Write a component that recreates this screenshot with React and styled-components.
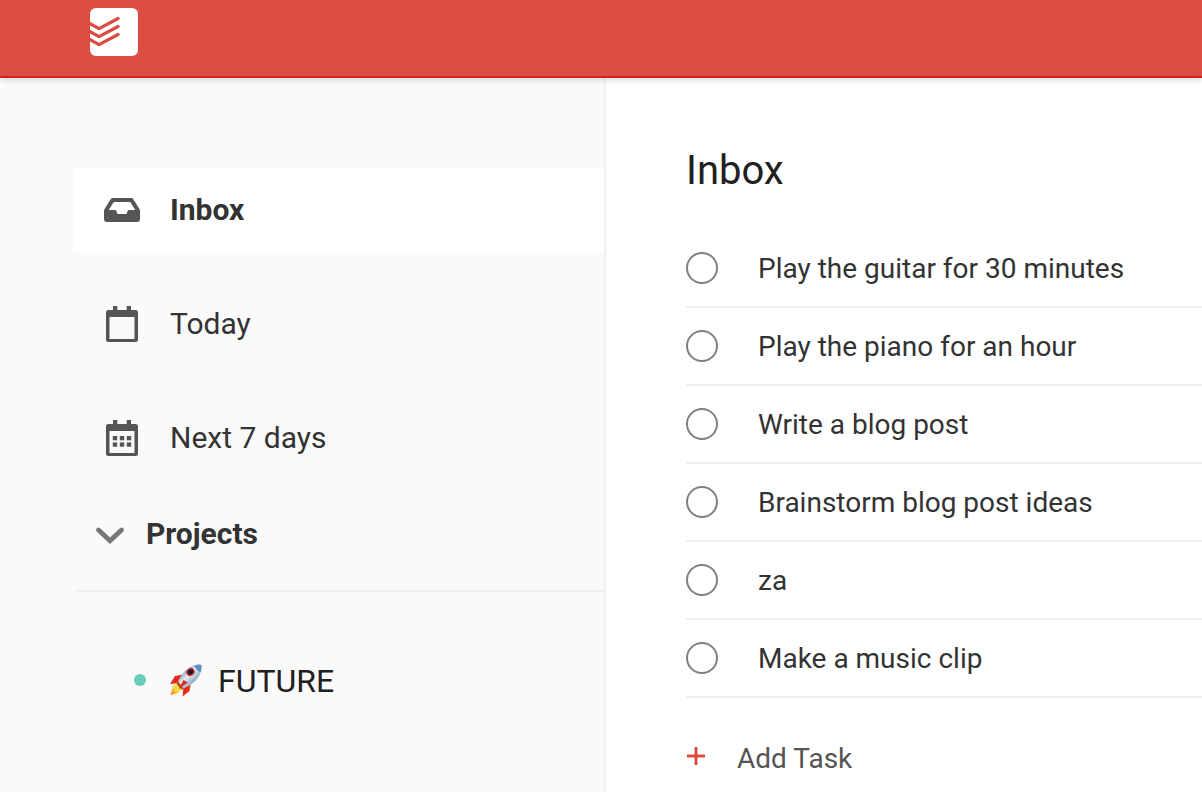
import React from "react";
import styled, { createGlobalStyle } from "styled-components";

const Global = createGlobalStyle`
  * { box-sizing: border-box; }
  body { margin: 0; overflow: hidden; font-family: Roboto, "Liberation Sans", sans-serif; color: #333; -webkit-font-smoothing: antialiased; }
`;
const Page = styled.div`
  height: 792px;
  display: flex;
  flex-direction: column;
  overflow: hidden;
  background: #fff;
`;
const TopBar = styled.header`
  height: 78px;
  flex: none;
  padding: 8px 90px;
  background: #db4c43;
  border-bottom: 2px solid #cf2315;
  box-shadow: 0 2px 6px rgba(0, 0, 0, 0.15);
  z-index: 1;
`;
const Svg = styled.svg`
  display: block;
  flex: none;
`;
const Body = styled.div`
  flex: 1;
  display: flex;
  min-height: 0;
`;
const Sidebar = styled.aside`
  width: 606px;
  flex: none;
  padding: 90px 0 0 74px;
  background: #fafafa;
  border-right: 2px solid #f0f0f0;
`;
const Filters = styled.nav`
  display: flex;
  flex-direction: column;
  gap: 30px;
`;
const FilterItem = styled.a`
  height: 84px;
  display: flex;
  align-items: center;
  gap: 28px;
  padding-left: 28px;
  background: ${(p) => (p.$active ? "#fff" : "transparent")};
  font-size: 30px;
  line-height: 36px;
  font-weight: ${(p) => (p.$active ? 700 : 400)};
`;
const ProjectsHeader = styled.div`
  height: 112px;
  display: flex;
  align-items: center;
  gap: 20px;
  padding: 0 0 3px 20px;
  border-bottom: 2px solid #f0f0f0;
  font-size: 30px;
  font-weight: 700;
`;
const ProjectRow = styled.div`
  display: flex;
  align-items: center;
  height: 60px;
  margin-top: 59px;
  padding-left: 60px;
  color: #202020;
  font-size: 32px;
`;
const Dot = styled.span`
  width: 12px;
  height: 12px;
  margin: 0 23px 2px 0;
  border-radius: 50%;
  background: #6accbc;
`;
const ProjectName = styled.span`
  margin-left: 15px;
`;
const Main = styled.main`
  flex: 1;
  padding: 69px 0 0 80px;
`;
const Title = styled.h1`
  margin: 0 0 35px;
  height: 48px;
  line-height: 48px;
  font-size: 40px;
  font-weight: 400;
  color: #202020;
`;
const TaskList = styled.ul`
  list-style: none;
  margin: 0;
  padding: 0;
`;
const Task = styled.li`
  height: 78px;
  display: flex;
  align-items: center;
  gap: 40px;
  border-bottom: 2px solid #f0f0f0;
  font-size: 28px;
`;
const Check = styled.span`
  width: 32px;
  height: 32px;
  border: 2px solid #808080;
  border-radius: 50%;
`;
const AddTask = styled.div`
  display: flex;
  align-items: center;
  gap: 31px;
  margin-top: 39px;
  height: 42px;
  font-size: 28px;
  color: #555;
`;

const Logo = () => (
  <Svg width="48" height="48" viewBox="0 0 48 48">
    <rect width="48" height="48" rx="6" fill="#fff" />
    <g fill="none" stroke="#db4c43" strokeWidth="3.2" strokeLinejoin="round" strokeLinecap="round">
      <path d="M-1 15L9 20.700L28 10.500" />
      <path d="M-1 23L9 28.700L28 18.500" />
      <path d="M-1 31L9 36.700L28 26.500" />
    </g>
  </Svg>
);
const InboxIcon = () => (
  <Svg width="40" height="40" viewBox="0 0 40 40">
    <path
      fill="#555"
      fillRule="evenodd"
      d="M11 8H29Q30.6 8 31.5 9.4L37.4 19Q38 20 38 21V29Q38 32 35 32H5Q2 32 2 29V21Q2 20 2.6 19L8.500 9.400Q9.400 8 11 8ZM12.600 12Q11.500 12 11 12.900L6.800 20H13.400Q14 20 14.200 20.600L15 23Q15.300 24 16.300 24H23.700Q24.700 24 25 23L25.800 20.600Q26 20 26.600 20H33.200L29 12.900Q28.500 12 27.400 12Z"
    />
  </Svg>
);
const CalendarIcon = ({ dots }) => (
  <Svg width="40" height="40" viewBox="0 0 40 40">
    <path
      fill="#555"
      fillRule="evenodd"
      d="M11 2H15.300V6H24.700V2H29V6H33.500Q36 6 36 8.500V35.500Q36 38 33.500 38H6.500Q4 38 4 35.500V8.500Q4 6 6.500 6H11ZM7.500 13V35H32.500V13Z"
    />
    {dots &&
      [18, 24.4].map((y) =>
        [10.8, 17.8, 24.8].map((x) => <rect key={`${x}-${y}`} x={x} y={y} width="4.400" height="4.300" fill="#555" />)
      )}
  </Svg>
);
const Chevron = () => (
  <Svg width="32" height="32" viewBox="0 0 32 32">
    <path d="M4.500 12L16 22.700L27.500 12" fill="none" stroke="#777" strokeWidth="4.800" strokeLinecap="round" />
  </Svg>
);
const ProjectsLabel = styled.span`
  padding-bottom: 1px;
`;
const Rocket = () => (
  <Svg width="34" height="34" viewBox="0 0 34 34">
    <defs>
      <linearGradient id="hull" x1="0" y1="0" x2="1" y2="1">
        <stop offset="0.150" stopColor="#4c7fa9" />
        <stop offset="0.450" stopColor="#e2edf5" />
        <stop offset="0.650" stopColor="#9eb9cc" />
        <stop offset="1" stopColor="#3e6f99" />
      </linearGradient>
      <linearGradient id="flame" x1="1" y1="0" x2="0" y2="1">
        <stop offset="0" stopColor="#fff36b" />
        <stop offset="0.600" stopColor="#ffd43b" />
        <stop offset="1" stopColor="#f56a15" />
      </linearGradient>
    </defs>
    <path d="M14 10.500L6 12L1 20L10 19Z" fill="#e82b17" />
    <path d="M22 18L20.500 27L13.500 32.500L14.500 22Z" fill="#e82b17" />
    <path d="M9 18L4 22L1.500 31L9 29L14 24Z" fill="url(#flame)" />
    <path d="M9 18C12 10 18 3.500 25 1.500Q31 0 32.500 1Q33 5 31 10C28 17 21 22 14 24.500Z" fill="url(#hull)" />
    <path d="M25 1.500Q31 0 32.500 1Q33 5 31.500 8.500Q27 6 25 1.500Z" fill="#5b8fbd" />
    <path d="M9 17.500L14.500 24L13 26L7.500 20Z" fill="#ad4b20" />
    <path d="M14.500 16L9.500 25L19 18.500Z" fill="#d8321e" />
    <ellipse cx="21.500" cy="8" rx="4.300" ry="3.700" transform="rotate(-35 21.500 8)" fill="#cc2923" />
    <ellipse cx="21.500" cy="8" rx="2.800" ry="2.400" transform="rotate(-35 21.500 8)" fill="#161a28" />
  </Svg>
);
const Plus = () => (
  <Svg width="20" height="22" viewBox="0 0 20 22">
    <path d="M10 0V18M1 9H19" stroke="#db4c43" strokeWidth="3" fill="none" />
  </Svg>
);

const tasks = [
  "Play the guitar for 30 minutes",
  "Play the piano for an hour",
  "Write a blog post",
  "Brainstorm blog post ideas",
  "za",
  "Make a music clip",
];

export default function App() {
  return (
    <Page>
      <Global />
      <TopBar><Logo /></TopBar>
      <Body>
        <Sidebar>
          <Filters>
            <FilterItem $active><InboxIcon />Inbox</FilterItem>
            <FilterItem><CalendarIcon />Today</FilterItem>
            <FilterItem><CalendarIcon dots />Next 7 days</FilterItem>
          </Filters>
          <ProjectsHeader><Chevron /><ProjectsLabel>Projects</ProjectsLabel></ProjectsHeader>
          <ProjectRow><Dot /><Rocket /><ProjectName>FUTURE</ProjectName></ProjectRow>
        </Sidebar>
        <Main>
          <Title>Inbox</Title>
          <TaskList>
            {tasks.map((t) => (
              <Task key={t}><Check />{t}</Task>
            ))}
          </TaskList>
          <AddTask><Plus />Add Task</AddTask>
        </Main>
      </Body>
    </Page>
  );
}
